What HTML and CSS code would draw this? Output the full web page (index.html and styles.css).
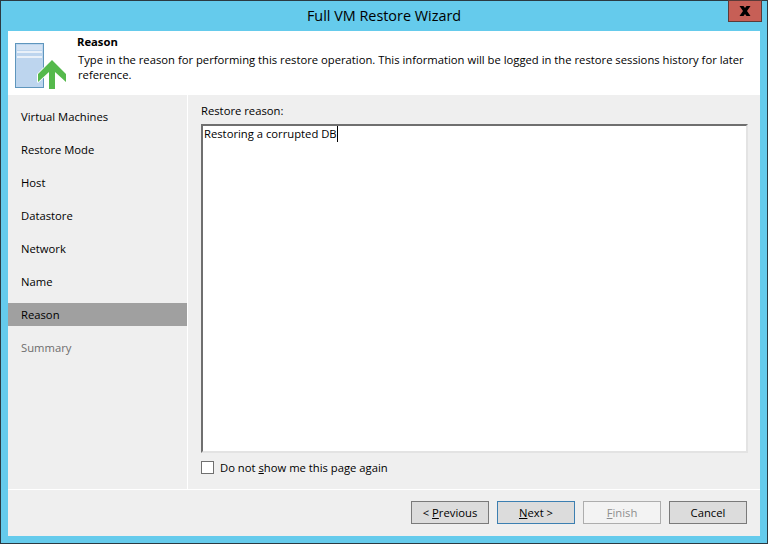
FILE: index.html
```html
<!DOCTYPE html>
<html lang="en">
<head>
<meta charset="utf-8">
<title>Full VM Restore Wizard</title>
<link rel="stylesheet" href="styles.css">
</head>
<body>
<div class="window">
  <div class="titlebar">Full VM Restore Wizard</div>
  <div class="close" aria-label="Close"><svg width="12" height="10" viewBox="0 0 12 10"><path d="M0.500 0h4L6 2 7.500 0h4L8 5l3.500 5h-4L6 8 4.500 10h-4L4 5z" fill="#000"/></svg></div>
  <div class="client">
    <header class="header">
      <svg class="header-icon" width="52" height="47" viewBox="0 0 52 47">
        <rect x="0.500" y="0.500" width="28" height="44" fill="#bdd5ee" stroke="#5f96bd"/>
        <path d="M2 2h25v5H2z" fill="#d3e2f3"/>
        <path d="M2 8h25v2H2zM2 13h25v2H2z" fill="#e9f1f9"/>
        <path d="M37 16 22 31v8l1 1 9-8v15h10V32l9 8 1-1v-8z" fill="#fff"/>
        <path d="M37 17 23 31v8l11-10v17h6V29l11 10v-8z" fill="#55b94c"/>
      </svg>
      <div class="header-text">
        <div class="header-title">Reason</div>
        <p class="header-desc">Type in the reason for performing this restore operation. This information will be logged in the restore sessions history for later reference.</p>
      </div>
    </header>
    <div class="main">
      <nav class="nav">
        <div class="nav-item">Virtual Machines</div>
        <div class="nav-item">Restore Mode</div>
        <div class="nav-item">Host</div>
        <div class="nav-item">Datastore</div>
        <div class="nav-item">Network</div>
        <div class="nav-item">Name</div>
        <div class="nav-item nav-active">Reason</div>
        <div class="nav-item nav-disabled">Summary</div>
      </nav>
      <section class="content">
        <div class="field-label">Restore reason:</div>
        <div class="textbox"><span class="typed">Restoring a corrupted DB</span></div>
        <label class="check-row"><span class="checkbox"></span><span class="check-text">Do not <u>s</u>how me this page again</span></label>
      </section>
    </div>
    <footer class="footer">
      <div class="btn"><span>&lt; <u>P</u>revious</span></div>
      <div class="btn btn-default"><span><u>N</u>ext &gt;</span></div>
      <div class="btn btn-disabled"><span><u>F</u>inish</span></div>
      <div class="btn"><span>Cancel</span></div>
    </footer>
  </div>
</div>
</body>
</html>
```

FILE: styles.css
```css
* { box-sizing: border-box; }
html, body { margin: 0; height: 100%; }
body { font-family: "Open Sans", "Noto Sans", sans-serif; font-size: 11.25px; color: #000; overflow: hidden; }
.window { position: relative; width: 768px; height: 544px; background: #65cbec; border: 1px solid #2b3a42; display: flex; flex-direction: column; padding: 0 7px 7px; }
.titlebar { height: 30px; flex: none; text-align: center; font-size: 14.4px; line-height: 29px; color: #000; }
.close { position: absolute; top: -1px; right: 5px; width: 34px; height: 22px; background: #c75f56; border: 1px solid #5b3a38; display: flex; align-items: center; justify-content: center; }
.client { flex: 1; display: flex; flex-direction: column; background: #efefef; min-height: 0; }
.header { height: 64px; flex: none; background: #fff; display: flex; }
.header-icon { flex: none; margin: 12px 0 0 7px; }
.header-text { margin-left: 10px; padding-top: 3px; width: 676px; }
.header-title { font-weight: 700; line-height: 15px; }
.header-desc { margin: 3px 0 0 1px; line-height: 15px; }
.main { flex: 1; display: flex; min-height: 0; border-bottom: 1px solid #fff; }
.nav { width: 180px; flex: none; border-right: 1px solid #fff; padding-top: 10px; display: flex; flex-direction: column; gap: 10px; }
.nav-item { height: 23px; line-height: 23px; padding-left: 13px; width: 179px; }
.nav-active { background: #a0a0a0; }
.nav-disabled { color: #6d6d6d; }
.content { flex: 1; padding: 9px 12px 0 13px; display: flex; flex-direction: column; min-width: 0; }
.field-label { line-height: 14px; height: 20px; }
.textbox { height: 329px; flex: none; background: #fff; border: 2px solid #e3e3e3; border-top-color: #6f6f6f; border-left-color: #6f6f6f; padding: 0 1px; line-height: 16px; }
.typed { border-right: 1px solid #000; display: inline-block; height: 16px; }
.check-row { display: flex; align-items: center; gap: 6px; margin-top: 7px; height: 15px; }
.check-text { line-height: 13px; }
.checkbox { width: 13px; height: 13px; background: #fff; border: 1px solid #707070; flex: none; }
.footer { height: 46px; flex: none; display: flex; justify-content: flex-end; gap: 8px; padding: 11px 13px 0 0; }
.btn { width: 78px; height: 23px; background: #dcdcdc; border: 1px solid #7a7a7a; display: flex; align-items: center; justify-content: center; line-height: 15px; }
.btn-default { border-color: #3c7fb1; }
.btn-disabled { background: #f3f3f3; border-color: #adadad; color: #8f8f8f; }
```
